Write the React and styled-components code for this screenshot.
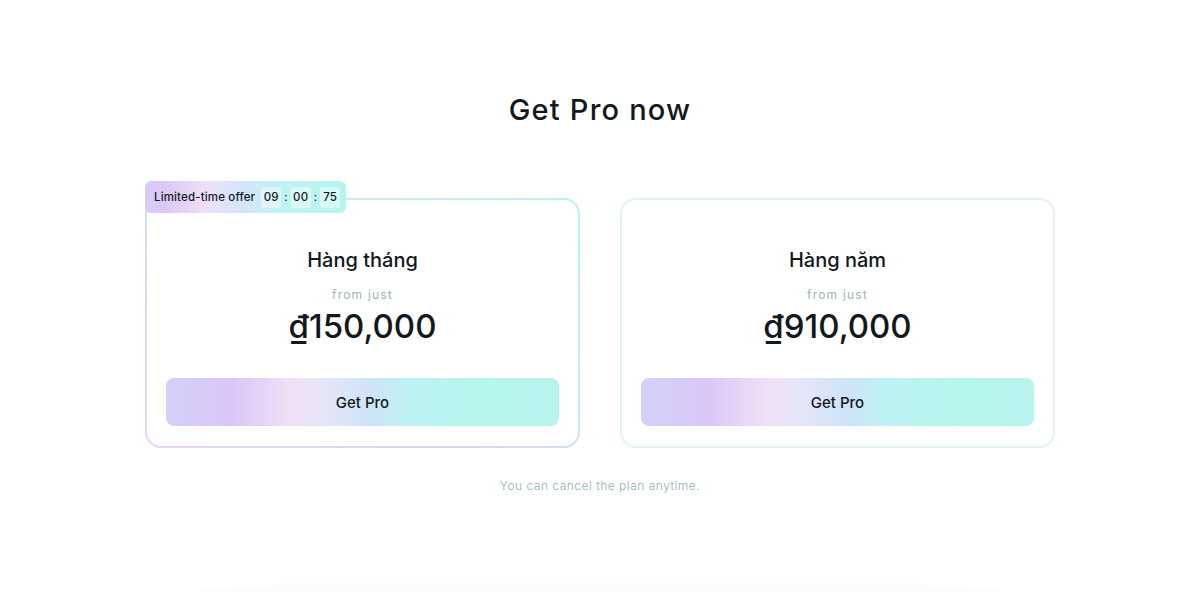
import React from 'react';
import styled, { createGlobalStyle } from 'styled-components';

const GlobalStyle = createGlobalStyle`
  body {
    margin: 0;
    background: #ffffff;
    font-family: Inter, "Noto Sans", sans-serif;
    color: #12181d;
  }
`

const Page = styled.div`
  display: flex;
  flex-direction: column;
  align-items: center;
  padding-top: 92px;
  height: 592px;
  box-sizing: border-box;
  overflow: hidden;
`

const Title = styled.h1`
  margin: 0;
  font-size: 29px;
  line-height: 36px;
  font-weight: 500;
  letter-spacing: 1.2px;
`

const Plans = styled.div`
  display: grid;
  grid-template-columns: 435px 435px;
  gap: 40px;
  margin-top: 70px;
`

const Card = styled.div`
  position: relative;
  display: flex;
  flex-direction: column;
  align-items: center;
  height: 250px;
  box-sizing: border-box;
  padding: 46px 19px 20px;
  border: 2px solid transparent;
  border-radius: 16px;
  background: ${p => p.$highlight
    ? 'linear-gradient(#fff, #fff) padding-box, linear-gradient(30deg, #ead4f6 0%, #dcd6f6 35%, #c4eef2 70%, #b8f3f0 100%) border-box'
    : 'linear-gradient(#fff, #fff) padding-box, linear-gradient(#e2f3f2, #e2f3f2) border-box'};
`

const Badge = styled.div`
  position: absolute;
  top: -19px;
  left: -2px;
  display: flex;
  align-items: center;
  gap: 3px;
  height: 32px;
  padding: 0 6px 0 9px;
  border-radius: 6px;
  font-size: 11.5px;
  font-weight: 500;
  letter-spacing: 0.15px;
  background: linear-gradient(90deg, #d6cdf8 0%, #dcc6f6 10%, #efe0f6 30%, #d2e6f8 50%, #bff3f3 70%, #b6f4ec 100%);
`

const OfferLabel = styled.span`
  margin-right: 3px;
`

const TimeBox = styled.span`
  display: inline-flex;
  align-items: center;
  justify-content: center;
  width: 20px;
  height: 21px;
  border-radius: 3px;
  background: rgba(255, 255, 255, 0.45);
  font-size: 11.5px;
`

const Colon = styled.span`
  font-size: 11px;
`

const PlanName = styled.div`
  font-size: 20px;
  line-height: 28px;
  font-weight: 500;
`

const FromJust = styled.div`
  margin-top: 13px;
  font-size: 12px;
  line-height: 16px;
  color: #9eb4bf;
  letter-spacing: 1.2px;
`

const Price = styled.div`
  margin-top: 3px;
  font-size: 33px;
  line-height: 40px;
  font-weight: 500;
`

const GetButton = styled.button`
  margin-top: 32px;
  width: 100%;
  height: 48px;
  border: none;
  border-radius: 8px;
  font-family: inherit;
  font-size: 15px;
  font-weight: 500;
  color: #12181d;
  cursor: pointer;
  background: linear-gradient(90deg, #d3d1f8 0%, #dac7f7 17%, #f1e0f6 32%, #e6e6f8 40%, #cfe4f8 52%, #bdf2f3 62%, #b4f6ee 80%, #b9f3ef 100%);
`

const Note = styled.div`
  margin-top: 30px;
  font-size: 12px;
  line-height: 16px;
  color: #8fb0bd;
  font-weight: 300;
  letter-spacing: 0.5px;
`

const Fade = styled.div`
  margin-top: 84px;
  width: 800px;
  height: 20px;
  border-radius: 50% 50% 0 0 / 100% 100% 0 0;
  background: linear-gradient(to bottom, rgba(0, 0, 0, 0), rgba(0, 0, 0, 0.015));
`

const plans = [
  { name: 'Hàng tháng', price: '₫150,000', offer: true },
  { name: 'Hàng năm', price: '₫910,000', offer: false },
]

export default function App() {
  return (
    <>
      <GlobalStyle />
      <Page>
        <Title>Get Pro now</Title>
        <Plans>
          {plans.map(plan => (
            <Card key={plan.name} $highlight={plan.offer}>
              {plan.offer && (
                <Badge>
                  <OfferLabel>Limited-time offer</OfferLabel>
                  <TimeBox>09</TimeBox>
                  <Colon>:</Colon>
                  <TimeBox>00</TimeBox>
                  <Colon>:</Colon>
                  <TimeBox>75</TimeBox>
                </Badge>
              )}
              <PlanName>{plan.name}</PlanName>
              <FromJust>from just</FromJust>
              <Price>{plan.price}</Price>
              <GetButton>Get Pro</GetButton>
            </Card>
          ))}
        </Plans>
        <Note>You can cancel the plan anytime.</Note>
        <Fade />
      </Page>
    </>
  );
}
